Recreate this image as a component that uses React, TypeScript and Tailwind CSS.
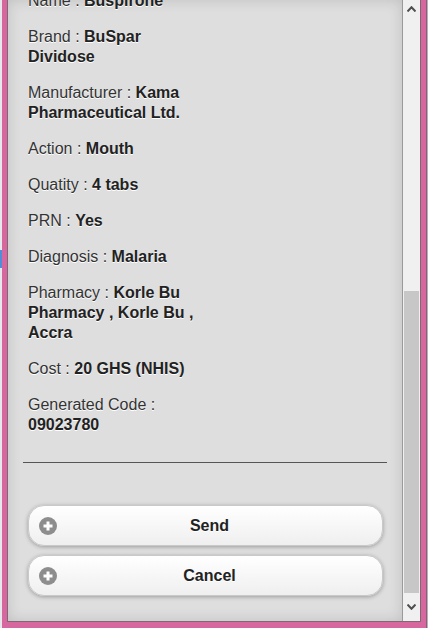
const details = [
  { label: "Name", value: "Buspirone" },
  { label: "Brand", value: "BuSpar Dividose" },
  { label: "Manufacturer", value: "Kama Pharmaceutical Ltd." },
  { label: "Action", value: "Mouth" },
  { label: "Quatity", value: "4 tabs" },
  { label: "PRN", value: "Yes" },
  { label: "Diagnosis", value: "Malaria" },
  { label: "Pharmacy", value: "Korle Bu Pharmacy , Korle Bu , Accra" },
  { label: "Cost", value: "20 GHS (NHIS)" },
  { label: "Generated Code", value: "09023780" },
];

const PlusDisc = () => (
  <svg width="18" height="18" viewBox="0 0 18 18">
    <circle cx="9" cy="9" r="9" fill="#8d8d8d" />
    <path d="M9 4.5v9M4.5 9h9" stroke="#fff" strokeWidth="3" />
  </svg>
);

const ActionButton = ({ label }: { label: string }) => (
  <button className="relative flex h-[41px] w-full items-center justify-center rounded-2xl border border-[#c9c9c9] bg-gradient-to-b from-white to-[#efefef] pl-[40px] pr-[32px] text-base font-bold text-[#222] shadow-[0_1px_4px_rgba(0,0,0,0.3)] [text-shadow:0_1px_0_#fff]">
    <span className="absolute left-[10px] top-[11px]">
      <PlusDisc />
    </span>
    {label}
  </button>
);

const Caret = ({ down }: { down?: boolean }) => (
  <svg width="9" height="6" viewBox="0 0 9 6" className={down ? "rotate-180" : ""}>
    <path d="M0.5 5.5L4.5 1.2L8.5 5.5" fill="none" stroke="#4f4f4f" strokeWidth="2" />
  </svg>
);

const App = () => {
  return (
    <div className="flex h-[628px] w-[428px] overflow-hidden bg-[#9dbfb4] font-['Liberation_Sans',Arial,sans-serif]">
      <div className="flex w-[2px] flex-col bg-[#e4e9ec]">
        <div className="mt-[250px] h-[18px] bg-[#4f8fd8]" />
      </div>

      <div className="flex flex-1 border-r border-[#a7507f] bg-[#d6689f] pb-[6px] pl-[5px] pr-[5px]">
        <div className="flex flex-1 border-b border-l border-r border-[#7d6873]">
          <div className="flex flex-1 flex-col overflow-hidden border-r border-[#9a9a9a] bg-[#dedede] px-[15px] shadow-[inset_0_0_14px_rgba(0,0,0,0.14)]">
            <div className="-mt-[9px] ml-[5px] flex w-[178px] flex-col gap-4 text-base leading-5 text-[#333] [text-shadow:0_1px_0_#fff]">
              {details.map((d) => (
                <p key={d.label}>
                  {d.label} : <span className="font-bold text-[#222]">{d.value}</span>
                </p>
              ))}
            </div>

            <hr className="mt-[27px] border-t border-[#555]" />

            <div className="ml-[5px] mr-[4px] mt-[42px] flex flex-col gap-[9px]">
              <ActionButton label="Send" />
              <ActionButton label="Cancel" />
            </div>
          </div>

          <div className="flex w-[17px] flex-col items-center bg-[#f0f0f0]">
            <div className="flex h-[17px] items-center justify-center">
              <Caret />
            </div>
            <div className="h-[274px]" />
            <div className="w-[15px] flex-1 bg-[#c7c7c7]" />
            <div className="flex h-[28px] items-center justify-center">
              <Caret down />
            </div>
          </div>
        </div>
      </div>

      <div className="w-[1px] bg-[#9dbfb4]" />
    </div>
  );
};

export default App;
